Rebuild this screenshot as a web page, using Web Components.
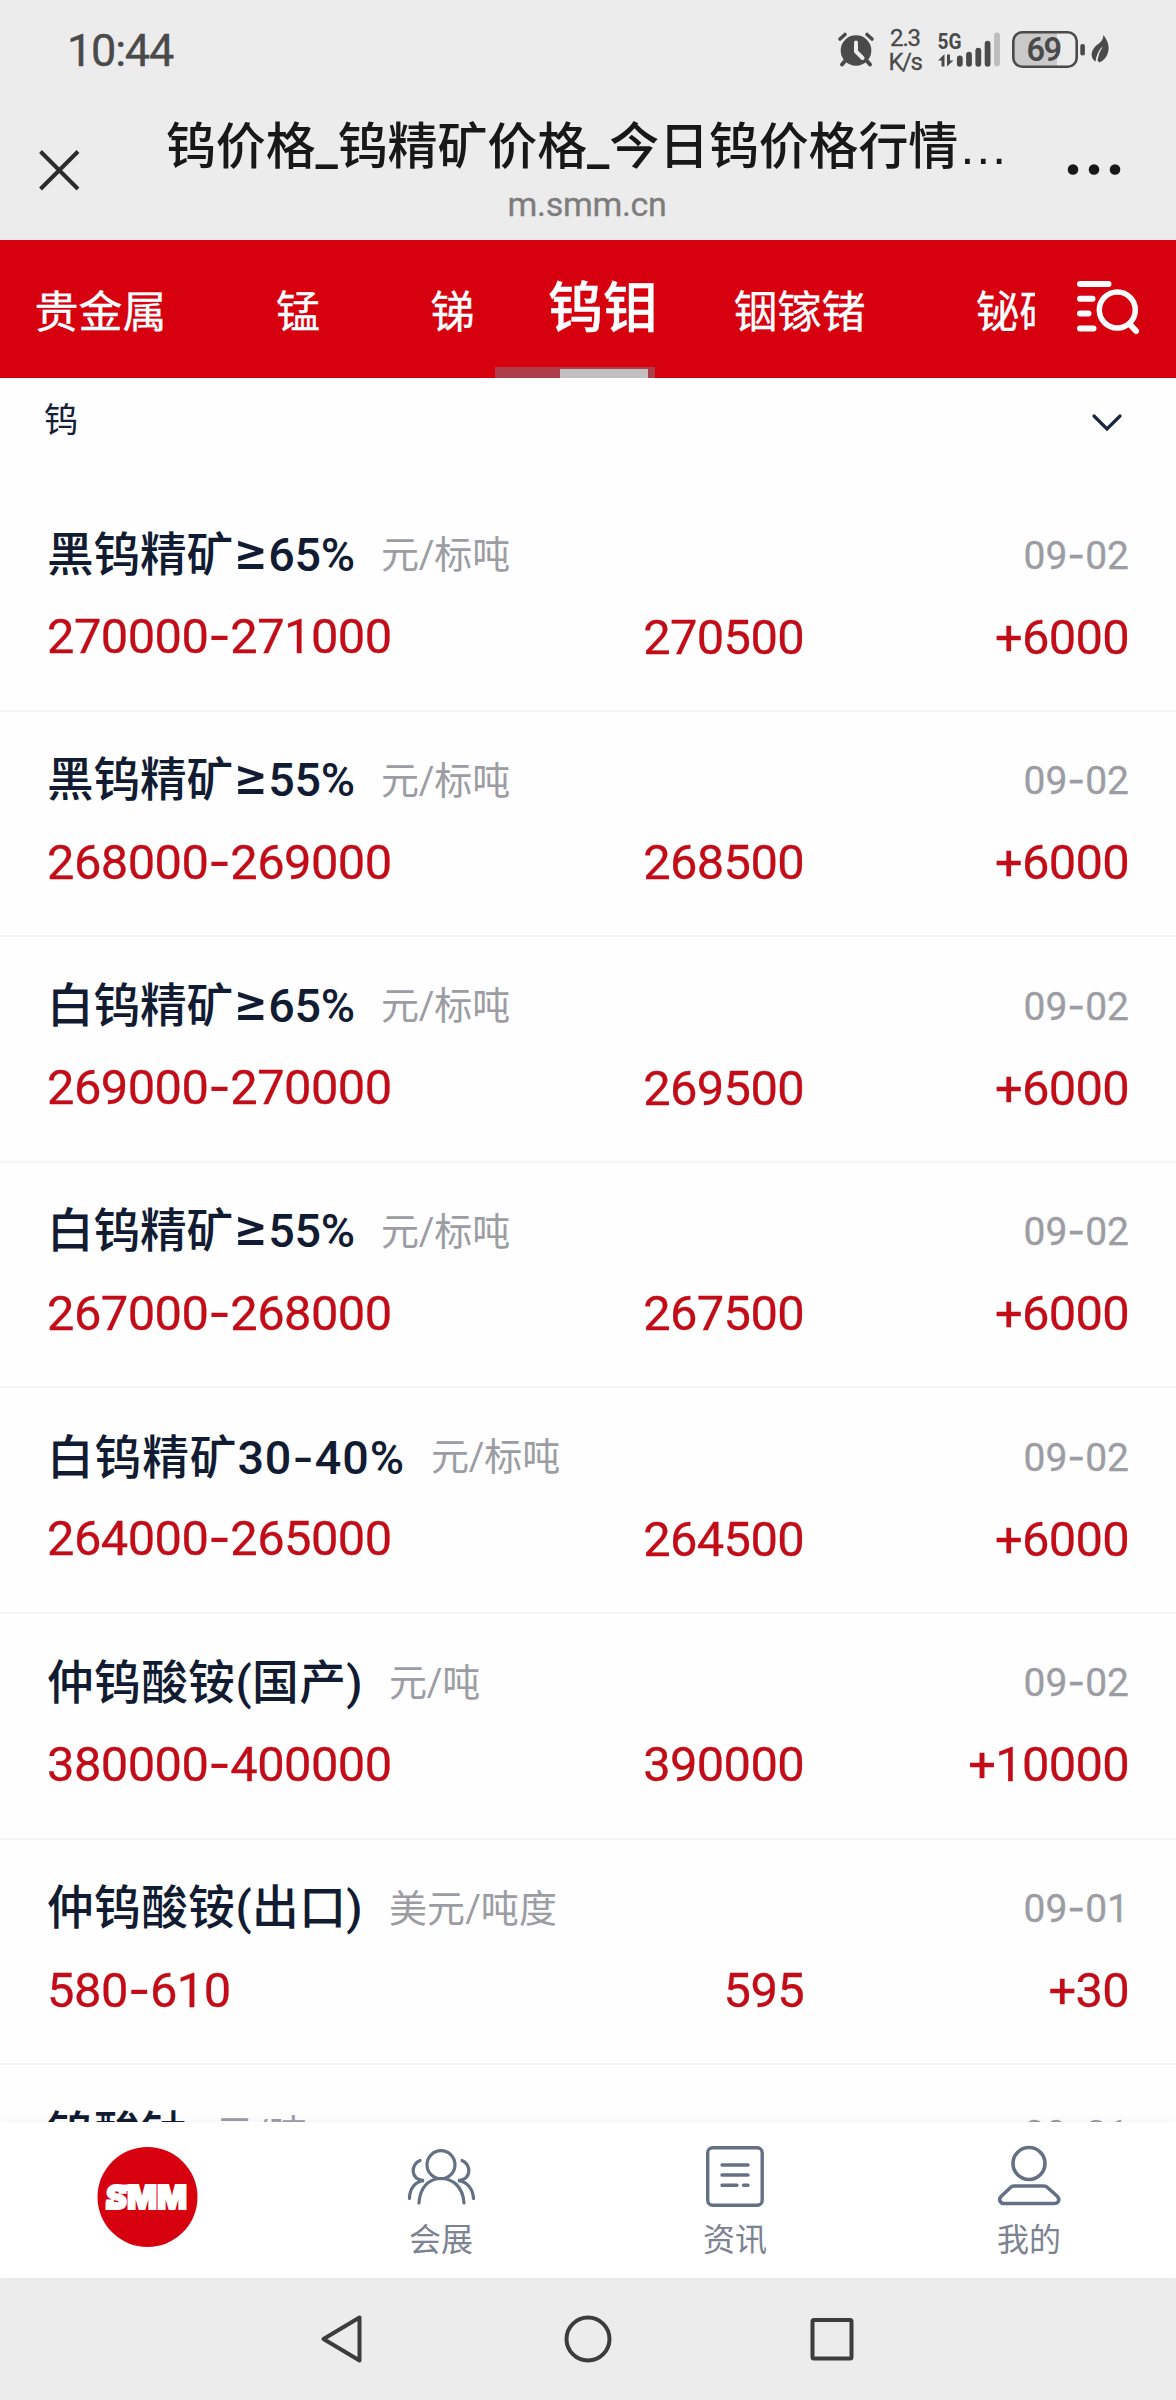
<!DOCTYPE html>
<html lang="zh-CN">
<head>
<meta charset="utf-8">
<title>钨价格</title>
<style>
html,body{margin:0;padding:0}
body{width:1176px;height:2400px;overflow:hidden;background:#fefefe;font-family:Roboto,"Noto Sans CJK SC",sans-serif}
</style>
</head>
<body>
<price-app></price-app>
<script>
class Base extends HTMLElement{
  constructor(){super();this.attachShadow({mode:'open'});}
  connectedCallback(){this.shadowRoot.innerHTML=this.render();}
}
const def=(n,f)=>customElements.define(n,class extends Base{render(){return f(this)}});

/* Text line whose tracking is adjusted so that it spans the width given in "w". */
customElements.define('fit-text',class extends HTMLElement{
  constructor(){super();this.attachShadow({mode:'open'});}
  connectedCallback(){
    this.shadowRoot.innerHTML='<style>:host{display:inline-block;white-space:nowrap;line-height:1}.h{font-family:Inter,sans-serif}.g{font-family:Inter,sans-serif;font-size:1.14em;line-height:0}.e{font-family:"Liberation Sans",sans-serif}</style><span id="t"></span>';
    const s=this.shadowRoot.getElementById('t'),t=this.getAttribute('t');
    s.innerHTML=t.replace(/-/g,'<span class="h">-</span>').replace(/≥/g,'<span class="g">≥</span>').replace(/…/g,'<span class="e">…</span>');
    const w=+this.getAttribute('w');
    if(w){const d=(w-s.getBoundingClientRect().width)/[...t].length;s.style.letterSpacing=d+'px';this.style.width=w+'px';}
  }
});

def('status-bar',()=>`<style>
:host{display:flex;height:100px;box-sizing:border-box;padding:0 66px 0 67px;align-items:center;color:#4a4a4a}
.time{font-size:45px;flex:1;-webkit-text-stroke:.4px #4a4a4a}
.net{font-size:24px;line-height:21px;text-align:center;width:36px;margin-right:11px;-webkit-text-stroke:.3px #4a4a4a}
svg{display:block}
</style>
<div class="time"><fit-text t="10:44" w="106"></fit-text></div>
<svg width="51" height="44" viewBox="836 28 51 44" fill="#4a4a4a"><circle cx="856" cy="50.5" r="15.3"/><path d="M845 61l-3 3.5M867 61l3 3.5" stroke="#4a4a4a" stroke-width="4" stroke-linecap="round"/><path d="M840 39l5-4.500M872 39l-5-4.500" stroke="#4a4a4a" stroke-width="3.600" stroke-linecap="round"/><path d="M856 42.500V51.500l6.500 6.500" fill="none" stroke="#ececec" stroke-width="4" stroke-linecap="round"/></svg>
<div class="net"><fit-text t="2.3" w="30"></fit-text><br><fit-text t="K/s" w="33"></fit-text></div>
<svg width="176" height="44" viewBox="934 28 176 44" fill="#4a4a4a"><text x="937.500" y="49" font-size="22" font-weight="700" font-family="Roboto" textLength="24" lengthAdjust="spacingAndGlyphs">5G</text>
<path d="M938 60.500L944.500 54V66.500H941.500V60.500ZM947 54.500H950V60.500H953.500L947 66.500Z"/>
<path d="M959.800 58.500V63.800M969 54.700V63.800M978.300 50.700V63.800M987.600 43.700V63.800" stroke="#4a4a4a" stroke-width="5.800" stroke-linecap="round"/><path d="M997 35.500V63.500" stroke="#bdbdbd" stroke-width="5.800" stroke-linecap="round"/>
<path d="M1022 33H1057V66.500H1022Q1014 66.500 1014 58V41Q1014 33 1022 33Z" fill="#c9c9c9"/><rect x="1013.300" y="32.300" width="63.400" height="34.400" rx="9" fill="none" stroke="#4a4a4a" stroke-width="2.600"/>
<text x="1026.500" y="61" font-size="32.500" font-weight="600" font-family="Roboto" textLength="35.500">69</text>
<rect x="1080.300" y="44" width="4.600" height="11.500" rx="2"/>
<path d="M1103.500 35Q1111 45 1107.500 54Q1105 60.500 1099 62.500L1097.500 60Q1099 52 1103 46Q1097 51 1095.500 61.500Q1090.500 58 1092 52Q1093.500 47 1099 43.500Q1103 40.500 1103.500 35Z"/></svg>`);

def('title-bar',()=>`<style>
:host{display:flex;height:140px;align-items:flex-start}
.side{display:block;flex:none}
.mid{width:842px;display:flex;flex-direction:column;align-items:center}
.t{font-size:50px;font-weight:500;color:#181818;margin-top:22px;height:50px}
.u{font-size:34px;color:#7d7d7d;margin-top:14.500px;height:34px;-webkit-text-stroke:.3px #7d7d7d}
</style>
<svg class="side" width="166" height="140" viewBox="0 100 166 140"><path d="M40.500 151.500L78 189M78 151.500L40.500 189" stroke="#2c2c2c" stroke-width="4"/></svg>
<div class="mid"><fit-text class="t" t="钨价格_钨精矿价格_今日钨价格行情…" w="842"></fit-text><fit-text class="u" t="m.smm.cn" w="159"></fit-text></div>
<svg class="side" width="168" height="140" viewBox="1008 100 168 140" fill="#181818"><circle cx="1073" cy="169.500" r="5.300"/><circle cx="1094" cy="169.500" r="5.300"/><circle cx="1115" cy="169.500" r="5.300"/></svg>`);

def('metal-tabs',()=>`<style>
:host{display:flex;height:138px;background:#d7000f;color:#fff;position:relative}
.tabs{width:1035px;overflow:hidden;display:flex;align-items:center;white-space:nowrap;font-size:44px;line-height:60px;height:138px;padding-left:34.500px;box-sizing:border-box;flex:none;-webkit-text-stroke:.3px #fff}
.tabs span{flex:none;padding-top:7px}
.tabs .on{font-size:55px;font-weight:500;line-height:70px;padding-top:0;margin-top:-2px}
.bar{position:absolute;left:495px;bottom:0;width:160px;height:11px;background:#ad3e49;display:flex;align-items:flex-end}
.bar i{width:88px;height:9px;margin-left:65px;background:#c0c0c0}
</style>
<div class="tabs"><span style="width:241.500px">贵金属</span><span style="width:154.500px">锰</span><span style="width:117.500px">锑</span><span class="on" style="width:185.500px">钨钼</span><span style="width:242px">铟镓锗</span><span>铋硒碲</span></div>
<svg width="141" height="138" viewBox="1035 240 141 138" fill="none" stroke="#fff" stroke-width="6" stroke-linecap="round"><path d="M1080 284H1108.500M1080 298.700H1092.500M1080 313.600H1088.500M1080 328.500H1093.500"/><circle cx="1117.300" cy="310" r="18" stroke-width="5.500"/><path d="M1130.500 325L1136 331"/></svg>
<div class="bar"><i></i></div>`);

def('sub-filter',()=>`<style>
:host{display:flex;height:108px;box-sizing:border-box;padding:25px 53px 0 44px;justify-content:space-between;font-size:34px;line-height:34px;color:#152036}
svg{margin-top:8px}
</style><span>钨</span><svg width="32" height="22" viewBox="0 0 32 22" fill="none" stroke="#1b2740" stroke-width="3.200" stroke-linecap="round"><path d="M3 5L16 18L29 5"/></svg>`);

def('price-row',e=>{const a=k=>e.getAttribute(k);const tw=s=>[...s].reduce((n,c)=>n+(c=='-'?23:26.8),0);
return `<style>
:host{display:block;height:225.600px;box-sizing:border-box;border-bottom:2px solid #f5f6f9;padding:45px 47px 0 47px}
.top{display:flex;height:48px;align-items:center}
.n{font-size:46.700px;font-weight:500;color:#111c33}
.u{font-size:38px;color:#9b9da3;flex:1;margin-left:${a('g')}px}
.d{font-size:39px;color:#9b9da3;-webkit-text-stroke:.3px #9b9da3}
.vals{display:flex;font-size:48.800px;color:#c20c18;margin-top:34px;height:48px;align-items:center;-webkit-text-stroke:.3px #c20c18}
.vals>*{flex:none}
.m{width:366px;text-align:right;margin-left:auto}
.c{width:325px;text-align:right}
</style>
<div class="top"><fit-text class="n" t="${a('n')}" w="${a('nw')}"></fit-text><span class="u"><fit-text t="${a('u')}" w="${a('uw')}"></fit-text></span><fit-text class="d" t="${a('d')}" w="105.500"></fit-text></div>
<div class="vals"><fit-text t="${a('r')}" w="${tw(a('r'))}"></fit-text><span class="m"><fit-text t="${a('m')}" w="${tw(a('m'))}"></fit-text></span><span class="c"><fit-text t="${a('c')}" w="${tw(a('c'))}"></fit-text></span></div>`});

def('price-list',()=>{
const rows=[
['黑钨精矿≥65%',308,'元/标吨',129,'09-02','270000-271000','270500','+6000'],
['黑钨精矿≥55%',308,'元/标吨',129,'09-02','268000-269000','268500','+6000'],
['白钨精矿≥65%',308,'元/标吨',129,'09-02','269000-270000','269500','+6000'],
['白钨精矿≥55%',308,'元/标吨',129,'09-02','267000-268000','267500','+6000'],
['白钨精矿30-40%',358,'元/标吨',129,'09-02','264000-265000','264500','+6000'],
['仲钨酸铵(国产)',316,'元/吨',91,'09-02','380000-400000','390000','+10000'],
['仲钨酸铵(出口)',316,'美元/吨度',168,'09-01','580-610','595','+30'],
['钨酸钠',141,'元/吨',91,'09-01','240000-242000','241000','+3000']];
return `<style>:host{display:block;height:1636px;overflow:hidden}</style>`+rows.map((r,i)=>`<price-row n="${r[0]}" nw="${r[1]}" u="${r[2]}" uw="${r[3]}" d="${r[4]}" r="${r[5]}" m="${r[6]}" c="${r[7]}" g="${i==7?27.5:26}"></price-row>`).join('')});

def('tab-item',()=>`<style>:host{flex:1;display:flex;flex-direction:column;align-items:center;font-size:32px;line-height:32px;color:#7c8392;padding-top:18px}.l{margin-top:4px}</style><slot name="icon"></slot><span class="l"><slot></slot></span>`);

def('bottom-tabs',()=>`<style>
:host{display:flex;height:156px;background:#fff;box-shadow:0 -2px 8px rgba(0,0,0,.04);position:relative}
svg{display:block}
</style>
<tab-item><svg slot="icon" width="110" height="112" viewBox="92 2140 110 112"><circle cx="147.500" cy="2197" r="50" fill="#d7000f"/><g fill="#fff" stroke="#fff" stroke-width="1.800" font-family="Inter" font-weight="900" font-size="33"><text x="106" y="2209.200" textLength="81" lengthAdjust="spacingAndGlyphs">SMM</text></g><path d="M105.500 2202H118V2210H105.500ZM116 2184.500H134V2191H116Z" fill="#fff"/></svg></tab-item>
<tab-item><svg slot="icon" width="80" height="80" viewBox="401 2140 80 80" fill="none" stroke="#647184" stroke-width="3.200" stroke-linecap="round"><circle cx="441" cy="2164.700" r="14"/><path d="M419 2203C420 2187 429 2178.500 441 2178.500S463 2187 464 2203"/><path d="M420 2160.500C411 2164 409.500 2179 424 2180.700C415 2181.500 409.500 2189 409.500 2198.500M462 2160.500C471 2164 472.500 2179 458 2180.700C467 2181.500 473 2189 473.500 2198.500"/></svg>会展</tab-item>
<tab-item><svg slot="icon" width="80" height="80" viewBox="695 2140 80 80" fill="none" stroke="#647184" stroke-width="3.400" stroke-linecap="round"><rect x="707.700" y="2147.700" width="54.500" height="57.500" rx="5"/><path d="M722 2165H748M722 2175H748M722 2185.300H737M743.500 2185.300H748"/></svg>资讯</tab-item>
<tab-item><svg slot="icon" width="80" height="80" viewBox="989 2140 80 80" fill="none" stroke="#647184" stroke-width="3.600" stroke-linejoin="round"><circle cx="1029" cy="2163.500" r="16"/><path d="M1014 2186H1044Q1046 2186 1047.500 2187.500L1057 2196Q1060 2199 1058 2202Q1057 2203.500 1054 2203.500H1004Q1001 2203.500 1000 2201Q999 2198.500 1001 2196.500L1010.500 2187.500Q1012 2186 1014 2186Z"/></svg>我的</tab-item>`);

def('system-nav',()=>`<style>:host{display:block;height:122px;background:#ececec}svg{display:block}</style>
<svg width="1176" height="122" viewBox="0 2278 1176 122" fill="none" stroke="#3c3c3c" stroke-width="4" stroke-linejoin="round"><path d="M359.500 2317.500V2360.500L323.500 2339Z"/><circle cx="588" cy="2339" r="21.500"/><rect x="812.500" y="2320" width="39" height="38.500" rx="1.500"/></svg>`);

def('price-app',()=>`<style>:host{display:flex;flex-direction:column;width:1176px;height:2400px}header{background:#ececec;flex:none}</style>
<header><status-bar></status-bar><title-bar></title-bar></header>
<metal-tabs></metal-tabs><sub-filter></sub-filter><price-list></price-list><bottom-tabs></bottom-tabs><system-nav></system-nav>`);
</script>
</body>
</html>
